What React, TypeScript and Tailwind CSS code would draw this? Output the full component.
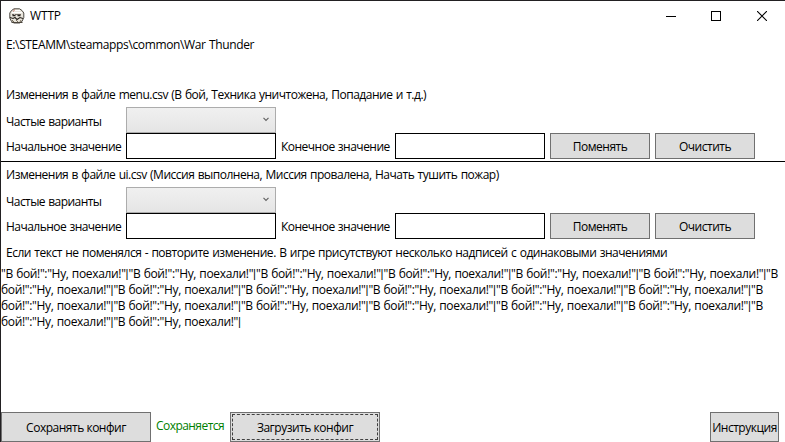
import { Fragment, type ReactNode } from "react";

const REPLACEMENT_COUNT = 20;

function Label({ children, className = "" }: { children: ReactNode; className?: string }) {
  return <div className={`whitespace-nowrap leading-4 ${className}`}>{children}</div>;
}

function Button({ children, className = "" }: { children: ReactNode; className?: string }) {
  return (
    <button
      className={`flex shrink-0 items-center justify-center whitespace-nowrap border border-[#707070] bg-[#dddddd] leading-4 tracking-[-0.48px] ${className}`}
    >
      {children}
    </button>
  );
}

function ComboBox() {
  return (
    <div className="flex h-[26px] w-[150px] items-center justify-end border border-[#acacac] bg-linear-to-b from-[#f0f0f0] to-[#e5e5e5] pr-[6px]">
      <svg width="6" height="5" viewBox="0 0 6 5" fill="none" stroke="#606060" strokeWidth="1.1" className="mb-[1px]">
        <path d="M0.5 0.8L3 3.4L5.5 0.8" />
      </svg>
    </div>
  );
}

function Section({ title }: { title: string }) {
  return (
    <section className="flex flex-col">
      <Label className="h-[26px] pl-[5px] pt-[6px] tracking-[-0.49px] [word-spacing:0.7px]">{title}</Label>
      <div className="flex h-[26px]">
        <Label className="w-[125px] pl-[5px] pt-[7px] tracking-[-0.55px] [word-spacing:0.6px]">Частые варианты</Label>
        <ComboBox />
      </div>
      <div className="flex h-[26px]">
        <Label className="w-[125px] pl-[5px] pt-[6px] tracking-[-0.53px] [word-spacing:0.6px]">Начальное значение</Label>
        <div className="w-[150px] border border-black bg-white" />
        <Label className="w-[119px] pl-[5px] pt-[6px] tracking-[-0.51px] [word-spacing:0.6px]">Конечное значение</Label>
        <div className="w-[150px] border border-black bg-white" />
        <Button className="ml-[5px] w-[100px] pt-px">Поменять</Button>
        <Button className="ml-[5px] w-[100px] pt-px">Очистить</Button>
      </div>
    </section>
  );
}

function AppIcon() {
  return (
    <svg width="16" height="16" viewBox="0 0 16 16">
      <path d="M5 .8H10.5L13 2.5L14.8 5V9.5L13 13.5L10.5 15H5L2.5 13.5L.8 10V5L2.5 2.5Z" fill="#e9e5dc" stroke="#39342e" strokeWidth=".9" />
      <path d="M4 2.5H11M3 4.5H13" stroke="#ffffff" />
      <path d="M5.5 1.5L4.5 3.5" stroke="#b8594b" strokeWidth=".9" />
      <path d="M3 6.5H5M6 6.5H12" stroke="#77706a" strokeWidth="1" />
      <path d="M3.5 7.5H6.5M8.5 7.5H11.5" stroke="#28231e" strokeWidth="1.3" />
      <path d="M1 9.5L4 10.5L6 9.5L8 11.5L11 9.5L14 10.5" fill="none" stroke="#28231e" strokeWidth="1.1" />
      <path d="M3 12L5 14M7 12L9 14M12 12L11 14" stroke="#766c58" />
      <path d="M2.5 14.5H13.5" stroke="#4b453c" />
    </svg>
  );
}

function TitleBar() {
  return (
    <header className="flex h-[30px] items-center pl-[8px]">
      <AppIcon />
      <div className="ml-[5px] tracking-[-0.15px]">WTTP</div>
      <div className="ml-auto flex items-center pr-[18px]">
        <svg width="10" height="10" shapeRendering="crispEdges">
          <path d="M0 5.5H10" stroke="#000" />
        </svg>
        <svg width="10" height="10" className="ml-[35px]" shapeRendering="crispEdges">
          <rect x="0.5" y="0.5" width="9" height="9" fill="none" stroke="#000" />
        </svg>
        <svg width="10" height="10" className="ml-[36px]">
          <path d="M0 0L10 10M10 0L0 10" stroke="#000" strokeWidth="1.1" />
        </svg>
      </div>
    </header>
  );
}

export default function App() {
  return (
    <main className="flex h-[442px] w-[785px] flex-col overflow-hidden border-l border-t border-[#222022] bg-white font-['Open_Sans','Noto_Sans',sans-serif] text-[12px] text-black">
      <TitleBar />
      <Label className="h-[50px] pl-[5px] pt-[6px] tracking-[-0.36px] [word-spacing:0.5px]">E:\STEAMM\steamapps\common\War Thunder</Label>
      <Section title="Изменения в файле menu.csv (В бой, Техника уничтожена, Попадание и т.д.)" />
      <div className="mt-[2px] h-px bg-black" />
      <div className="-mt-px">
        <Section title="Изменения в файле ui.csv (Миссия выполнена, Миссия провалена, Начать тушить пожар)" />
      </div>
      <Label className="h-[27px] pl-[5px] pt-[6px] tracking-[-0.48px] [word-spacing:0.7px]">
        Если текст не поменялся - повторите изменение. В игре присутствуют несколько надписей с одинаковыми значениями
      </Label>
      <p className="leading-4 tracking-[-0.34px] [word-spacing:0.5px]">
        {Array.from({ length: REPLACEMENT_COUNT }, (_, i) => (
          <Fragment key={i}>
            {'"В бой!":"Ну, поехали!"'}
            <span className="font-['Roboto',sans-serif] leading-none tracking-normal">|</span>
          </Fragment>
        ))}
      </p>
      <footer className="mt-auto flex h-[30px] shrink-0">
        <Button className="w-[150px] pt-px">Сохранять конфиг</Button>
        <Label className="w-[79px] pl-[5px] pt-[6px] tracking-[-0.55px] text-[#008000]">Сохраняется</Label>
        <Button className="w-[150px] p-px">
          <span className="flex h-full w-full items-center justify-center border border-dashed border-[#404040] pt-px">
            Загрузить конфиг
          </span>
        </Button>
        <Button className="ml-auto mr-[6px] w-[69px] pt-px">Инструкция</Button>
      </footer>
    </main>
  );
}
